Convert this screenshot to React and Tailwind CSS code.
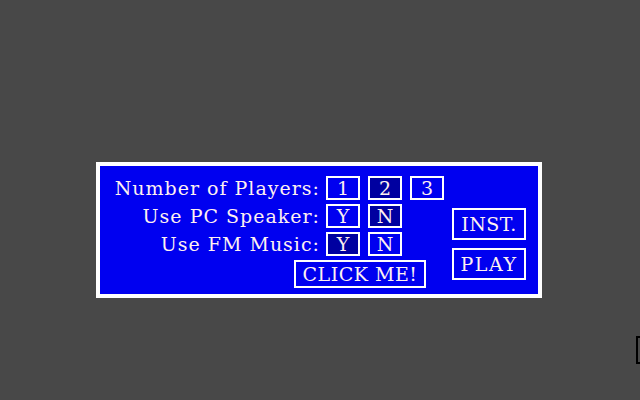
import React from 'react';

const font = { fontFamily: '"DejaVu Serif", "Liberation Serif", serif' };

function Box({ label, selected }) {
  return (
    <div
      className={`w-[34px] h-[24px] border-2 border-white flex items-center justify-center text-[19px] leading-none text-[#fff0f0] ${selected ? 'bg-[#0000a0]' : 'bg-[#0000f0]'}`}
    >
      {label}
    </div>
  );
}

function Row({ label, options, selected }) {
  return (
    <div className="flex items-center h-[24px]">
      <div className="w-[210px] text-right text-[19px] leading-none tracking-[1px] text-[#fff0f0] whitespace-nowrap">
        {label}
      </div>
      <div className="flex gap-[8px] ml-[6px]">
        {options.map((o, i) => (
          <Box key={o} label={o} selected={i === selected} />
        ))}
      </div>
    </div>
  );
}

export default function App() {
  return (
    <div className="relative w-[640px] h-[400px] bg-[#484848] overflow-hidden pt-[162px] pl-[96px]" style={font}>
      <div className="w-[446px] h-[136px] border-4 border-white bg-[#0000f0] flex pl-[10px] pt-[10px]">
        <div className="flex flex-col gap-[4px]">
          <Row label="Number of Players:" options={['1', '2', '3']} selected={1} />
          <Row label="Use PC Speaker:" options={['Y', 'N']} selected={1} />
          <Row label="Use FM Music:" options={['Y', 'N']} selected={0} />
          <div className="ml-[184px] w-[132px] h-[28px] border-2 border-white flex items-center justify-center text-[19px] leading-none tracking-[0.5px] text-[#fff0f0]">
            CLICK ME!
          </div>
        </div>
        <div className="ml-[8px] mt-[32px] flex flex-col gap-[8px]">
          <div className="w-[74px] h-[32px] border-2 border-white flex items-center justify-center text-[19px] leading-none tracking-[0.5px] text-[#fff0f0]">
            INST.
          </div>
          <div className="w-[74px] h-[32px] border-2 border-white flex items-center justify-center text-[19px] leading-none tracking-[1.5px] text-[#fff0f0]">
            PLAY
          </div>
        </div>
      </div>
      <div className="absolute left-[636px] top-[336px] w-[10px] h-[28px] border-2 border-black bg-[#484848]" />
    </div>
  );
}
